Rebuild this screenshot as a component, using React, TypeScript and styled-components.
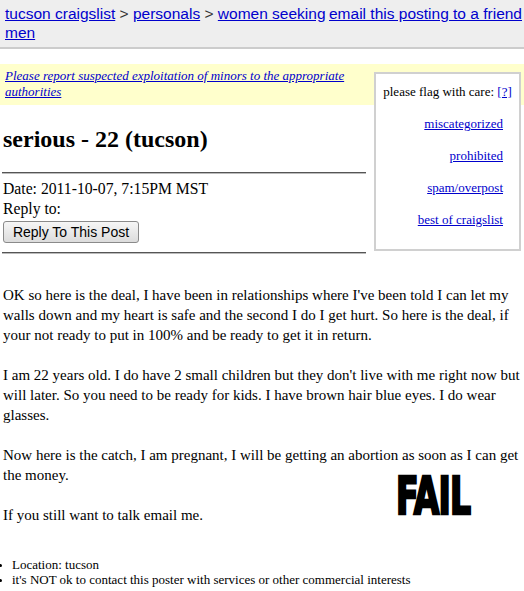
import styled, { createGlobalStyle } from "styled-components";

const GlobalStyle = createGlobalStyle`
  body {
    margin: 0;
    background: #fff;
    color: #000;
    font-family: "Liberation Serif", "Times New Roman", serif;
    font-size: 16px;
  }
  a {
    color: #0000cc;
  }
`;

const Page = styled.div`
  position: relative;
  width: 524px;
`;

const Header = styled.div`
  display: flex;
  align-items: flex-start;
  background: #eeeeee;
  border-bottom: 2px solid #cccccc;
  height: 40px;
  padding: 4px 2px 3px 5px;
  font-family: "Liberation Sans", Arial, sans-serif;
  font-size: 15.5px;
  line-height: 19px;
`;

const Crumbs = styled.div`
  flex: 1;
  color: #333;
`;

const EmailLink = styled.a`
  white-space: nowrap;
`;

const Notice = styled.div`
  margin-top: 15px;
  background: #ffffcc;
  padding: 4px 0 5px 5px;
  font-size: 13px;
  line-height: 16px;
  font-style: italic;
  a {
    display: block;
    width: 362px;
  }
`;

const TopRow = styled.div`
  display: flex;
  justify-content: space-between;
  align-items: flex-start;
`;

const PostHead = styled.div`
  width: 366px;
  padding-left: 3px;
`;

const Title = styled.h2`
  margin: 20px 0 19px;
  font-size: 24px;
  line-height: 28px;
  font-weight: bold;
`;

const Rule = styled.hr`
  width: 364px;
  margin: 0 0 0 -1px;
  border: 0;
  border-top: 1px solid #555;
  border-bottom: 1px solid #bbb;
  height: 0;
`;

const Meta = styled.div`
  margin-top: 5px;
  font-size: 15.7px;
  line-height: 20px;
`;

const ReplyButton = styled.button`
  display: block;
  margin: 2px 0 9px;
  width: 136px;
  height: 22px;
  padding: 0;
  font-family: "Liberation Sans", Arial, sans-serif;
  font-size: 14px;
  color: #000;
  background: linear-gradient(#f6f6f6, #dcdcdc);
  border: 1px solid #8a8a8a;
  border-radius: 3px;
`;

const FlagBox = styled.div`
  margin: -33px 3px 0 0;
  width: 143px;
  height: 175px;
  background: #fff;
  border: 2px solid #d0d0d0;
  font-size: 13px;
  line-height: 16px;
  text-align: right;
`;

const FlagTitle = styled.div`
  text-align: center;
  margin-top: 10px;
  margin-bottom: 16px;
`;

const FlagLink = styled.a`
  display: block;
  margin: 0 16px 16px 0;
`;

const Body = styled.div`
  padding: 0 4px 0 3px;
  margin-top: 31px;
  font-size: 15px;
  line-height: 20px;
`;

const Footer = styled.ul`
  margin: 32px 0 0;
  padding-left: 9px;
  font-size: 13px;
  line-height: 15px;
  li::marker {
    font-size: 10px;
  }
`;

// pasted-on caption lying over the post body
const Fail = styled.div`
  position: absolute;
  left: 396px;
  top: 471px;
  font-family: "Liberation Sans Narrow", "DejaVu Sans Condensed", "Liberation Sans", sans-serif;
  font-weight: bold;
  font-size: 51px;
  line-height: 51px;
  letter-spacing: -1px;
  -webkit-text-stroke: 2.5px #000;
  transform: scaleX(0.72);
  transform-origin: left top;
`;

export default function App() {
  return (
    <Page>
      <GlobalStyle />
      <Header>
        <Crumbs>
          <a href="#">tucson craigslist</a> &gt; <a href="#">personals</a> &gt;{" "}
          <a href="#">women seeking men</a>
        </Crumbs>
        <EmailLink href="#">email this posting to a friend</EmailLink>
      </Header>

      <Notice>
        <a href="#">Please report suspected exploitation of minors to the appropriate authorities</a>
      </Notice>

      <TopRow>
        <PostHead>
          <Title>serious - 22 (tucson)</Title>
          <Rule />
          <Meta>
            Date: 2011-10-07, 7:15PM MST
            <br />
            Reply to:
          </Meta>
          <ReplyButton>Reply To This Post</ReplyButton>
          <Rule />
        </PostHead>

        <FlagBox>
          <FlagTitle>
            please flag with care: <a href="#">[?]</a>
          </FlagTitle>
          <FlagLink href="#">miscategorized</FlagLink>
          <FlagLink href="#">prohibited</FlagLink>
          <FlagLink href="#">spam/overpost</FlagLink>
          <FlagLink href="#">best of craigslist</FlagLink>
        </FlagBox>
      </TopRow>

      <Body>
        OK so here is the deal, I have been in relationships where I've been told I can let my
        walls down and my heart is safe and the second I do I get hurt. So here is the deal, if
        your not ready to put in 100% and be ready to get it in return.
        <br />
        <br />
        I am 22 years old. I do have 2 small children but they don't live with me right now but
        will later. So you need to be ready for kids. I have brown hair blue eyes. I do wear
        glasses.
        <br />
        <br />
        Now here is the catch, I am pregnant, I will be getting an abortion as soon as I can get
        the money.
        <br />
        <br />
        If you still want to talk email me.
        <Footer>
          <li>Location: tucson</li>
          <li>it's NOT ok to contact this poster with services or other commercial interests</li>
        </Footer>
      </Body>

      <Fail>FAIL</Fail>
    </Page>
  );
}
